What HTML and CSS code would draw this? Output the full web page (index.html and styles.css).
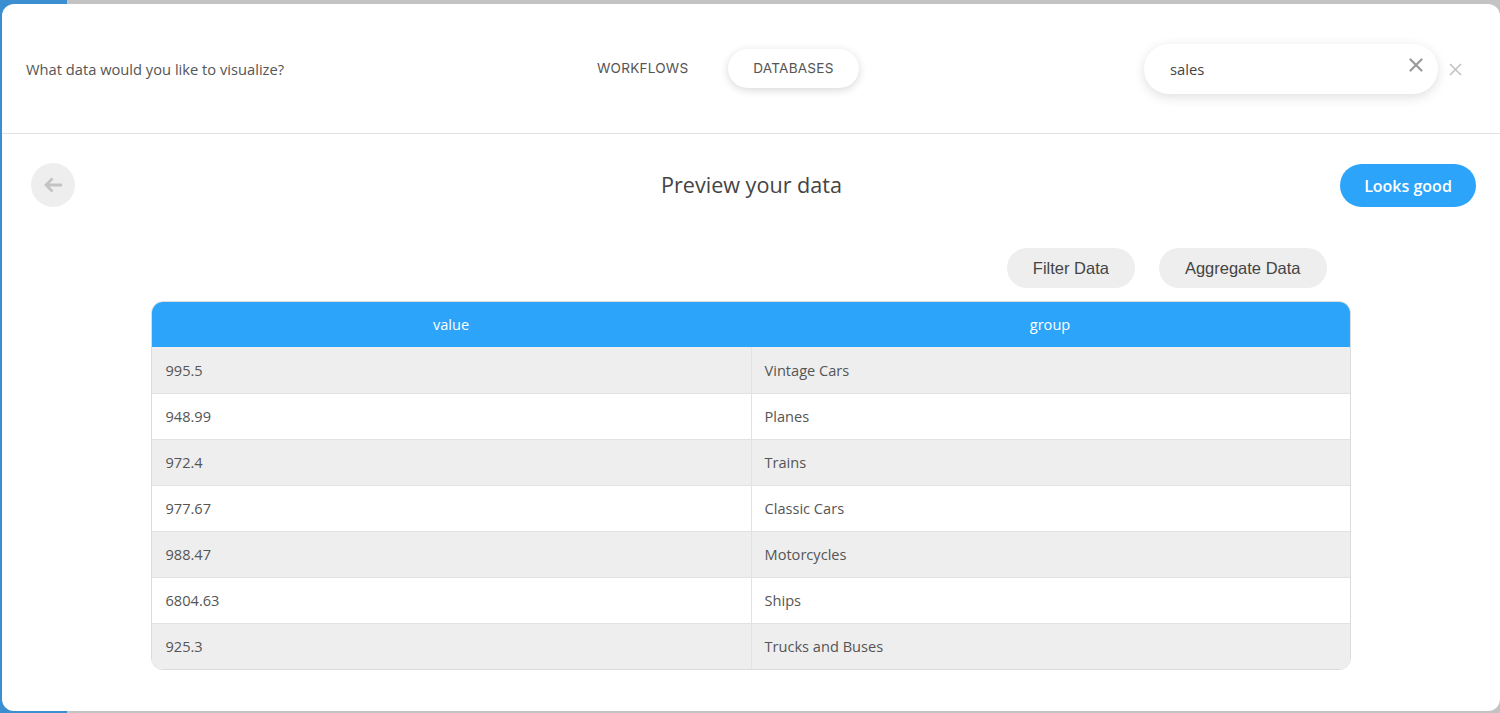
FILE: index.html
```html
<!DOCTYPE html>
<html>
<head>
<meta charset="utf-8">
<link rel="stylesheet" href="styles.css">
</head>
<body>
<div class="modal">
  <header class="topbar">
    <div class="question">What data would you like to visualize?</div>
    <nav class="tabs">
      <span class="tab">WORKFLOWS</span>
      <span class="tab active">DATABASES</span>
    </nav>
    <div class="search-group">
      <div class="search">
        <span class="search-text">sales</span>
        <svg class="search-clear" width="14" height="14" viewBox="0 0 14 14"><path d="M1.5 1.5 L12.5 12.5 M12.5 1.5 L1.5 12.5" stroke="#9a9a9a" stroke-width="2.2" stroke-linecap="round" fill="none"/></svg>
      </div>
      <svg class="close" width="13" height="13" viewBox="0 0 13 13"><path d="M1 1 L12 12 M12 1 L1 12" stroke="#c2c2c2" stroke-width="1.6" fill="none"/></svg>
    </div>
  </header>
  <section class="content">
    <div class="title-row">
      <div class="left">
        <div class="back">
          <svg width="20" height="16" viewBox="0 0 20 16"><path d="M19 8 H3 M9.5 1.5 L3 8 L9.5 14.5" stroke="#c3c3c3" stroke-width="2.8" fill="none"/></svg>
        </div>
      </div>
      <h1 class="title">Preview your data</h1>
      <div class="right">
        <button class="primary">Looks good</button>
      </div>
    </div>
    <div class="table-wrap">
      <div class="actions">
        <button class="pill">Filter Data</button>
        <button class="pill">Aggregate Data</button>
      </div>
      <div class="table">
        <div class="row head"><div class="cell">value</div><div class="cell">group</div></div>
        <div class="row odd"><div class="cell">995.5</div><div class="cell">Vintage Cars</div></div>
        <div class="row"><div class="cell">948.99</div><div class="cell">Planes</div></div>
        <div class="row odd"><div class="cell">972.4</div><div class="cell">Trains</div></div>
        <div class="row"><div class="cell">977.67</div><div class="cell">Classic Cars</div></div>
        <div class="row odd"><div class="cell">988.47</div><div class="cell">Motorcycles</div></div>
        <div class="row"><div class="cell">6804.63</div><div class="cell">Ships</div></div>
        <div class="row odd last"><div class="cell">925.3</div><div class="cell">Trucks and Buses</div></div>
      </div>
    </div>
  </section>
</div>
</body>
</html>
```
FILE: styles.css
```css
html, body {
  margin: 0;
  padding: 0;
  height: 713px;
  overflow: hidden;
}
body {
  background: linear-gradient(to right, #3b8fd0 0, #3b8fd0 67px, #c3c3c3 67px);
  font-family: "Open Sans", "Noto Sans", sans-serif;
  color: #555;
}
.modal {
  margin: 4px 0 0 2px;
  width: 1498px;
  height: 707px;
  background: #fff;
  border-radius: 12px;
  box-sizing: border-box;
}
.topbar {
  height: 130px;
  border-bottom: 1px solid #e2e2e2;
  display: flex;
  align-items: center;
  padding: 0 38px 0 24px;
  box-sizing: border-box;
}
.question {
  flex: 0 0 546px;
  font-size: 14.7px;
  color: #555;
}
.tabs {
  display: flex;
  gap: 15px;
  align-items: center;
}
.tab {
  font-family: "Inter", "Noto Sans", sans-serif;
  font-size: 13.6px;
  letter-spacing: 0.2px;
  color: #555;
  padding: 0 25px;
  height: 39px;
  line-height: 39px;
  border-radius: 20px;
}
.tab.active {
  background: #fff;
  box-shadow: 0 2px 8px rgba(0,0,0,0.16);
}
.search-group {
  margin-left: auto;
  display: flex;
  align-items: center;
  gap: 11px;
}
.search {
  width: 294px;
  height: 50px;
  border-radius: 25px;
  background: #fff;
  box-shadow: 0 3px 12px rgba(0,0,0,0.13);
  display: flex;
  align-items: center;
  padding: 0 15px 0 26px;
  box-sizing: border-box;
}
.search-text {
  font-size: 14.8px;
  color: #444;
  flex: 1;
}
.search-clear {
  margin-top: -7px;
}
.close {
  margin-top: 2px;
}
.content {
  padding: 28px 24px 0 29px;
}
.title-row {
  display: grid;
  grid-template-columns: 1fr auto 1fr;
  align-items: center;
  height: 44px;
}
.left { display: flex; }
.right { display: flex; justify-content: flex-end; padding-top: 2px; }
.back {
  width: 44px;
  height: 44px;
  border-radius: 50%;
  background: #eeeeee;
  display: flex;
  align-items: center;
  justify-content: center;
}
.title {
  margin: 0;
  font-size: 21.6px;
  font-weight: 400;
  color: #444;
  margin-right: 4px;
}
.primary {
  border: none;
  background: #2ca4fa;
  color: #fff;
  font-family: "Open Sans", sans-serif;
  font-weight: 600;
  font-size: 16px;
  width: 136px;
  height: 43px;
  border-radius: 22px;
}
.table-wrap {
  width: 1200px;
  margin: 42px auto 0;
  position: relative;
  left: -3px;
}
.actions {
  display: flex;
  justify-content: flex-end;
  gap: 24px;
  padding-right: 24px;
  margin-bottom: 13px;
}
.pill {
  border: none;
  background: #eeeeee;
  color: #444;
  font-family: "Liberation Sans", Arial, sans-serif;
  font-size: 16.5px;
  height: 40px;
  padding: 0 26px;
  border-radius: 20px;
}
.table {
  border: 1px solid #dcdcdc;
  border-radius: 12px;
  overflow: hidden;
}
.row {
  display: grid;
  grid-template-columns: 599px 1fr;
  height: 46px;
  border-top: 1px solid #e2e2e2;
  box-sizing: border-box;
  background: #fff;
}
.row.odd { background: #eeeeee; }
.row.head {
  background: #2ca4fa;
  border-top: none;
  height: 45px;
}
.row.head + .row { border-top: none; height: 46px; }
.cell {
  display: flex;
  align-items: center;
  padding-left: 14px;
  font-size: 14.6px;
  color: #555;
  padding-bottom: 1px;
}
.row .cell + .cell {
  border-left: 1px solid #e2e2e2;
  padding-left: 13px;
}
.row.head .cell {
  justify-content: center;
  color: #fff;
  padding-left: 0;
  border-left: none;
}
```
